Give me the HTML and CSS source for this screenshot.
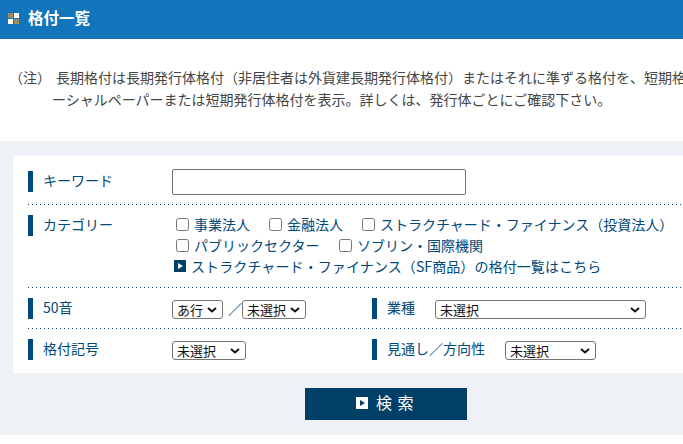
FILE: index.html
```html
<!DOCTYPE html>
<html lang="ja">
<head>
<meta charset="utf-8">
<title>格付一覧</title>
<link rel="stylesheet" href="styles.css">
</head>
<body>
<header class="page-head">
  <svg class="head-icon" width="11" height="11" viewBox="0 0 11 11"><rect width="5" height="5" fill="#a08a60"/><rect x="6" width="5" height="5" fill="#fff"/><rect y="6" width="5" height="5" fill="#fff"/><rect x="6" y="6" width="5" height="5" fill="#a08a60"/></svg>
  <h1>格付一覧</h1>
</header>
<section class="note">
  <span class="note-mark">（注）</span>
  <p>長期格付は長期発行体格付（非居住者は外貨建長期発行体格付）またはそれに準ずる格付を、短期格付はコマ<br>ーシャルペーパーまたは短期発行体格付を表示。詳しくは、発行体ごとにご確認下さい。</p>
</section>
<section class="panel">
  <form class="card">
    <div class="row row-key">
      <div class="label">キーワード</div>
      <input class="keyword" type="text">
    </div>
    <div class="row row-cat">
      <div class="label">カテゴリー</div>
      <div class="cats">
        <div class="cat-line">
          <label class="cat cat-a"><input type="checkbox">事業法人</label>
          <label class="cat cat-b"><input type="checkbox">金融法人</label>
          <label class="cat"><input type="checkbox">ストラクチャード・ファイナンス（投資法人）</label>
        </div>
        <div class="cat-line">
          <label class="cat cat-c"><input type="checkbox">パブリックセクター</label>
          <label class="cat"><input type="checkbox">ソブリン・国際機関</label>
        </div>
        <a class="sf-link" href="#">
          <svg width="12" height="12" viewBox="0 0 12 12"><rect width="12" height="12" fill="#003f66"/><path d="M4 3l5 3-5 3z" fill="#fff"/></svg>
          <span>ストラクチャード・ファイナンス（SF商品）の格付一覧はこちら</span>
        </a>
      </div>
    </div>
    <div class="row row-sel">
      <div class="half half-left">
        <div class="label">50音</div>
        <select class="s-gyo"><option>あ行</option></select>
        <span class="slash">／</span>
        <select class="s-on"><option>未選択</option></select>
      </div>
      <div class="half">
        <div class="label label-short">業種</div>
        <select class="s-ind"><option>未選択</option></select>
      </div>
    </div>
    <div class="row row-sel row-last">
      <div class="half half-left">
        <div class="label">格付記号</div>
        <select class="s-sym"><option>未選択</option></select>
      </div>
      <div class="half">
        <div class="label label-long">見通し／方向性</div>
        <select class="s-out"><option>未選択</option></select>
      </div>
    </div>
  </form>
  <button class="search" type="button">
    <svg width="12" height="12" viewBox="0 0 12 12"><rect width="12" height="12" fill="#fff"/><path d="M4 3l5 3-5 3z" fill="#003f66"/></svg>
    <span>検 索</span>
  </button>
</section>
</body>
</html>
```
FILE: styles.css
```css
* { box-sizing: border-box; }
html, body { margin: 0; padding: 0; overflow: hidden; background: #fff; }
body {
  width: 683px;
  height: 444px;
  font-family: "Noto Sans CJK JP", "Noto Sans", sans-serif;
  font-size: 14px;
  color: #333;
}
.page-head {
  height: 39px;
  background: #1275bb;
  display: flex;
  align-items: center;
  padding-left: 8px;
  gap: 9px;
}
.head-icon { flex: none; margin-top: -3px; }
.page-head h1 {
  margin: -5px 0 0;
  font-size: 15.5px;
  font-weight: 700;
  color: #fff;
  line-height: 20px;
}
.note {
  height: 102px;
  padding: 27px 0 0 9px;
  display: flex;
  width: 760px;
  line-height: 22px;
  color: #444;
}
.note-mark { width: 43px; flex: none; }
.note p { margin: 0; width: 720px; white-space: nowrap; text-indent: 4px; }
.panel {
  height: 294px;
  background: #eef1f6;
  padding: 15px 0 0 13px;
}
.card {
  width: 720px;
  height: 217px;
  background: #fff;
  padding: 0 0 0 15px;
  color: #00497a;
}
.row {
  display: flex;
  background-image: repeating-linear-gradient(90deg, #00497a 0 1px, transparent 1px 4px);
  background-size: 100% 1px;
  background-position: left bottom;
  background-repeat: no-repeat;
}
.row-key { height: 49px; padding-top: 15px; align-items: flex-start; }
.row-cat { height: 83px; padding-top: 10px; }
.row-sel { height: 41px; padding-top: 10px; }
.row-last { background-image: none; }
.label {
  width: 144px;
  flex: none;
  height: 21px;
  border-left: 5px solid #00497a;
  padding-left: 10px;
  line-height: 18px;
  font-size: 14px;
}
.keyword {
  width: 294px;
  height: 26px;
  margin-top: -2px;
  border: 1px solid #767676;
  border-radius: 2px;
  background: #fff;
}
.cats { margin-top: -2px; }
.cat-line { display: flex; height: 21px; align-items: center; }
.cat { display: flex; align-items: center; white-space: nowrap; }
.cat input {
  width: 13px;
  height: 13px;
  margin: 1px 5px 0 4px;
}
.cat-a { width: 93px; }
.cat-b { width: 93px; }
.cat-c { width: 163px; }
.sf-link {
  display: flex;
  align-items: center;
  height: 21px;
  color: #00497a;
  text-decoration: none;
  margin-left: 2px;
  gap: 5px;
  white-space: nowrap;
  letter-spacing: 0.1px;
}
.half { display: flex; align-items: flex-start; }
.half-left { width: 344px; }
select {
  appearance: none;
  -webkit-appearance: none;
  height: 19px;
  margin-top: 2px;
  font-family: inherit;
  font-size: 13px;
  line-height: 17px;
  padding: 0 0 0 4px;
  background-color: #fff;
  background-image: url("data:image/svg+xml,%3Csvg xmlns='http://www.w3.org/2000/svg' width='10' height='6'%3E%3Cpath d='M1 1l4 3.5L9 1' fill='none' stroke='%23111' stroke-width='2'/%3E%3C/svg%3E");
  background-repeat: no-repeat;
  background-position: right 5px center;
  color: #111;
  border: 1px solid #767676;
  border-radius: 3px;
}
.slash { width: 19px; text-align: right; color: #00497a; line-height: 20px; }
.s-gyo { width: 51px; }
.s-on { width: 64px; }
.s-sym { width: 74px; }
.half .label-short { width: 63px; }
.half .label-long { width: 133px; }
.s-ind { width: 211px; }
.s-out { width: 91px; }
.search {
  display: flex;
  align-items: center;
  justify-content: flex-start;
  width: 162px;
  height: 32px;
  margin: 15px 0 0 292px;
  padding: 0 0 0 51px;
  gap: 8px;
  border: 0;
  background: #003f66;
  color: #fff;
  font-family: inherit;
  font-size: 16px;
  letter-spacing: 1px;
}
.search svg { margin-top: -2px; }
.search span { margin-top: -4px; line-height: 24px; }
```
